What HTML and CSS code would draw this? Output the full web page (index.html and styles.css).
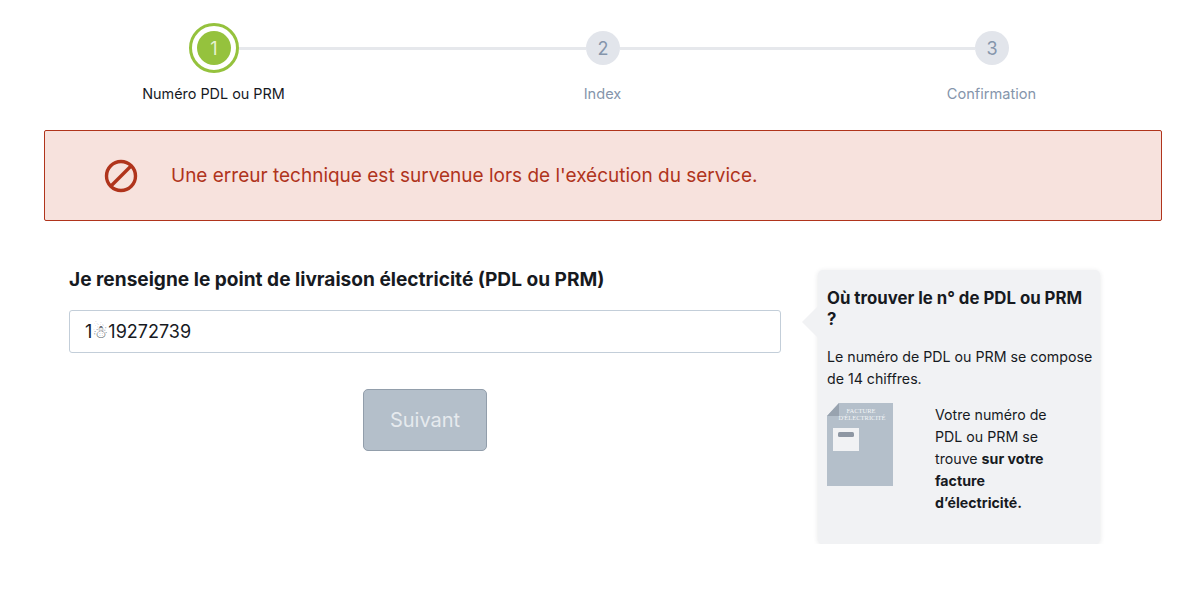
FILE: index.html
```html
<!DOCTYPE html>
<html lang="fr">
<head>
	<meta charset="utf-8">
	<title>Numéro PDL ou PRM</title>
	<link rel="stylesheet" href="styles.css">
</head>
<body>
	<div class="stepper">
		<div class="track">
			<span class="dot dot-on"><span class="dot-in">1</span></span>
			<span class="line line-a"></span>
			<span class="dot">2</span>
			<span class="line line-b"></span>
			<span class="dot">3</span>
		</div>
		<div class="labels">
			<span class="label label-on">Numéro PDL ou PRM</span>
			<span class="label">Index</span>
			<span class="label">Confirmation</span>
		</div>
	</div>

	<div class="alert">
		<svg class="alert-icon" viewBox="0 0 34 34" width="34" height="34">
			<circle cx="17" cy="17" r="14.5" fill="none" stroke="#b0341c" stroke-width="3.4"/>
			<line x1="7" y1="27" x2="27" y2="7" stroke="#b0341c" stroke-width="3.4"/>
		</svg>
		<span>Une erreur technique est survenue lors de l'exécution du service.</span>
	</div>

	<div class="content">
		<form class="form">
			<div class="form-title">Je renseigne le point de livraison électricité (PDL ou PRM)</div>
			<div class="field" role="textbox"><span>1</span><span class="snow">☃</span><span>19272739</span></div>
			<div class="actions">
				<button class="btn" type="button" disabled>Suivant</button>
			</div>
		</form>

		<aside class="help">
			<h3>Où trouver le n° de PDL ou PRM ?</h3>
			<p class="help-intro">Le numéro de PDL ou PRM se compose de 14 chiffres.</p>
			<div class="help-row">
				<svg class="bill" viewBox="0 0 66 83" width="66" height="83">
					<path d="M12 0H66V83H0V13Z" fill="#b4bfca"/>
					<path d="M12 0V13H0Z" fill="#98a3af"/>
					<text x="34" y="10" text-anchor="middle" class="bill-txt">FACTURE</text>
					<text x="35" y="17" text-anchor="middle" class="bill-txt">D'ÉLECTRICITÉ</text>
					<rect x="6" y="25" width="26" height="23" fill="#f1f2f4"/>
					<rect x="11" y="29" width="16" height="5" rx="1.5" fill="#8e97a3"/>
				</svg>
				<p>Votre numéro de PDL ou PRM se trouve <b>sur votre facture d’électricité.</b></p>
			</div>
		</aside>
	</div>
</body>
</html>
```

FILE: styles.css
```css
* { box-sizing: border-box; }
body {
	margin: 0;
	background: #fff;
	color: #171a1f;
	font-family: Inter, "Liberation Sans", sans-serif;
}

.stepper { padding-top: 23px; }
.track {
	display: flex;
	align-items: center;
	padding-left: 189px;
}
.dot {
	width: 34px;
	height: 34px;
	border-radius: 50%;
	background: #e2e5eb;
	color: #8595ab;
	font-size: 18px;
	display: flex;
	align-items: center;
	justify-content: center;
	flex: none;
}
.dot-on {
	width: 50px;
	height: 50px;
	background: #fff;
	border: 3px solid #95c23d;
}
.dot-in {
	width: 34px;
	height: 34px;
	border-radius: 50%;
	background: #95c23d;
	color: #e8f2d2;
	display: flex;
	align-items: center;
	justify-content: center;
}
.line { height: 3px; background: #e6e8ec; flex: none; }
.line-a { width: 347px; }
.line-b { width: 355px; }
.labels {
	display: grid;
	grid-template-columns: repeat(3, 389px);
	padding-left: 19px;
	margin-top: 11px;
}
.label {
	text-align: center;
	font-size: 14.6px;
	line-height: 20px;
	color: #8595ab;
}
.label-on { color: #171a1f; font-size: 14.4px; }

.alert {
	display: flex;
	align-items: center;
	height: 91px;
	margin: 26px 38px 0 44px;
	padding-left: 59px;
	gap: 33px;
	background: #f7e2dd;
	border: 1px solid #b0341c;
	border-radius: 2px;
	color: #b0341c;
	font-size: 19px;
}
.alert-icon { flex: none; margin-top: 1px; }

.content {
	display: flex;
	align-items: flex-start;
	padding: 49px 0 0 69px;
	gap: 37px;
}
.form { width: 712px; }
.form-title {
	font-size: 19.1px;
	font-weight: 700;
	line-height: 18px;
	margin-bottom: 22px;
}
.field {
	display: flex;
	align-items: center;
	height: 43px;
	padding: 0 15px;
	border: 1px solid #c3ced9;
	border-radius: 3px;
	background: #fff;
	color: #171a1f;
	font-size: 18px;
}
.snow {
	display: flex;
	justify-content: center;
	width: 16px;
	font-family: "DejaVu Sans", sans-serif;
	font-size: 18px;
	line-height: 20px;
	color: #55595f;
}
.actions {
	display: flex;
	justify-content: center;
	margin-top: 36px;
}
.btn {
	width: 124px;
	height: 62px;
	border: 1px solid #929eab;
	border-radius: 5px;
	background: #b4bfca;
	color: #e6eaee;
	font-family: inherit;
	font-size: 20px;
}

.help {
	position: relative;
	width: 282px;
	height: 274px;
	padding: 18px 4px 0 9px;
	background: #f1f2f4;
	border-radius: 5px;
	box-shadow: 0 1px 5px rgba(30, 40, 60, .12);
	font-size: 14.2px;
	line-height: 22px;
}
/* petite fleche vers le champ */
.help::before {
	content: "";
	position: absolute;
	left: -11px;
	top: 40px;
	width: 24px;
	height: 24px;
	background: #f1f2f4;
	transform: rotate(45deg);
}
.help h3 {
	position: relative;
	margin: 0 4px 16px 0;
	font-size: 16.8px;
	line-height: 21px;
	font-weight: 700;
}
.help p { margin: 0; }
.help .help-intro { margin-bottom: 13px; }
.help-row {
	display: flex;
	align-items: flex-start;
	gap: 42px;
}
.help-row p { width: 118px; margin-top: 1px; }
.bill { flex: none; }
.bill-txt {
	font-family: "Liberation Serif", serif;
	font-size: 6.5px;
	fill: #f3f5f7;
}
```
